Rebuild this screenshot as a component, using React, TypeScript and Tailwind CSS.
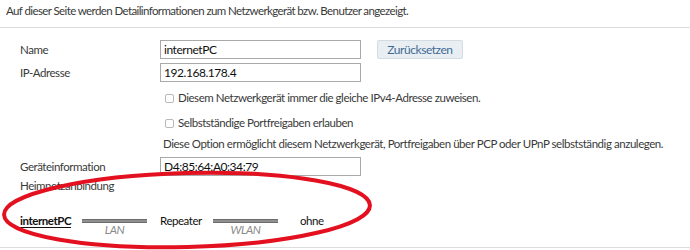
import React from "react";

const font = { fontFamily: "Lato, 'Open Sans', sans-serif" };

const Field = ({ value }: { value: string }) => (
    <div className="w-[201px] h-[19px] border border-[#a9a9a9] bg-white px-[3px] text-[12px] leading-[17px] text-[#111]">
        {value}
    </div>
);

const Checkbox = ({ label }: { label: string }) => (
    <div className="flex items-center h-[16px] pl-[165px]">
        <span className="w-[9px] h-[9px] border border-[#b9b9b9] rounded-[2px] bg-white" />
        <span className="ml-[4px]">{label}</span>
    </div>
);

const Bar = ({ label }: { label: string }) => (
    <div className="relative w-[65px] h-[4px] flex flex-col">
        <div className="h-[1px] bg-[#6d6d6d]" />
        <div className="h-[2px] bg-[#8f8f8f]" />
        <div className="h-[1px] bg-[#6d6d6d]" />
        <span className="absolute left-0 right-0 top-[5px] text-center italic text-[11.5px] leading-[12px] text-[#8a8a8a]">
            {label}
        </span>
    </div>
);

export default function App() {
    return (
        <div
            className="relative w-[690px] h-[250px] bg-white text-[11.5px] leading-[16px] tracking-[-0.45px] text-[#3a3a3a] overflow-hidden whitespace-nowrap"
            style={font}
        >
            <p className="pl-[6px] pt-[3px] tracking-[-0.6px]">
                Auf dieser Seite werden Detailinformationen zum Netzwerkgerät bzw. Benutzer angezeigt.
            </p>
            <div className="mt-[8px] h-px bg-[#dcdcdc]" />

            <div className="mt-[12px] flex flex-col">
                <div className="flex items-center pl-[20px]">
                    <span className="w-[140px]">Name</span>
                    <Field value="internetPC" />
                    <button className="ml-[16px] w-[86px] h-[19px] rounded-[2px] border border-[#d3dbe3] bg-[#e9eef3] text-[#3f6a93] text-[12px] leading-[17px]">
                        Zurücksetzen
                    </button>
                </div>
                <div className="mt-[4px] flex items-center pl-[20px]">
                    <span className="w-[140px]">IP-Adresse</span>
                    <Field value="192.168.178.4" />
                </div>
                <div className="mt-[8px]">
                    <Checkbox label="Diesem Netzwerkgerät immer die gleiche IPv4-Adresse zuweisen." />
                </div>
                <div className="mt-[9px]">
                    <Checkbox label="Selbstständige Portfreigaben erlauben" />
                </div>
                <p className="mt-[5px] pl-[163px]">
                    Diese Option ermöglicht diesem Netzwerkgerät, Portfreigaben über PCP oder UPnP selbstständig anzulegen.
                </p>
                <div className="mt-[5px] flex items-center pl-[20px]">
                    <span className="w-[140px]">Geräteinformation</span>
                    <Field value="D4:85:64:A0:34:79" />
                </div>
                <p className="mt-[2px] pl-[20px]">Heimnetzanbindung</p>

                <div className="mt-[19px] flex items-center pl-[20px] text-[#111]">
                    <span className="w-[62px] font-bold underline underline-offset-2">internetPC</span>
                    <Bar label="LAN" />
                    <span className="ml-[13px] w-[53px]">Repeater</span>
                    <Bar label="WLAN" />
                    <span className="ml-[22px]">ohne</span>
                </div>
            </div>

            <div className="absolute left-0 right-0 top-[247px] h-px bg-[#dcdcdc]" />

            <svg className="absolute left-0 top-0 pointer-events-none" width="690" height="250">
                <ellipse
                    cx="187"
                    cy="210"
                    rx="183"
                    ry="37"
                    transform="rotate(-1.5 187 210)"
                    fill="none"
                    stroke="#e3101f"
                    strokeWidth="4"
                />
            </svg>
        </div>
    );
}
